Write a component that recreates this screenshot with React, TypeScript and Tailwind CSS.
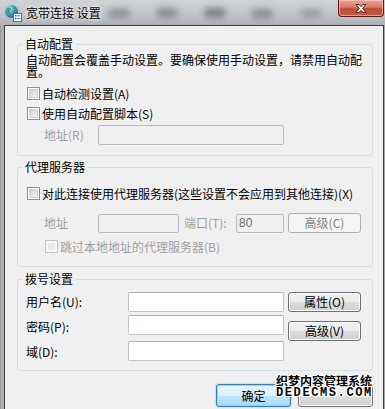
import React from "react";

function Check({ disabled }: { disabled?: boolean }) {
  if (disabled) {
    return (
      <span className="flex w-[13px] h-[13px] shrink-0 border border-[#c2c4c6] bg-[#f7f7f7] p-[2px]">
        <span className="flex-1 bg-[#e9e9e9]" />
      </span>
    );
  }
  return (
    <span className="flex w-[13px] h-[13px] shrink-0 border border-[#8e8f8f] bg-white p-[1px]">
      <span className="flex-1 border border-[#cfcfcf] bg-[linear-gradient(135deg,#cfd1d3_0%,#e6e6e6_60%,#f4f4f4_100%)]" />
    </span>
  );
}

function Btn({
  children,
  disabled,
  className = "",
}: {
  children: React.ReactNode;
  disabled?: boolean;
  className?: string;
}) {
  const base =
    "flex w-[73px] h-[20px] items-center justify-center rounded-[3px] border shrink-0";
  const look = disabled
    ? "border-[#adb2b5] bg-[#f4f4f4] text-[#838383]"
    : "border-[#707070] bg-[linear-gradient(to_bottom,#f2f2f2_0%,#ebebeb_50%,#dddddd_50%,#cfcfcf_100%)] shadow-[inset_0_0_0_1px_#fcfcfc] text-black";
  return <div className={`${base} ${look} ${className}`}>{children}</div>;
}

function Field({ w, h = 20, disabled, value }: { w: string; h?: number; disabled?: boolean; value?: string }) {
  return (
    <div
      className={`${w} ${h === 20 ? "h-[20px]" : "h-[19px]"} shrink-0 rounded-[2px] border flex items-center pl-[2px] ${
        disabled ? "border-[#b9bdc1] bg-[#f0f0f0] text-[#6d6d6d]" : "border-[#c3c7cc] border-t-[#abadb3] bg-white"
      } font-['Liberation_Sans',sans-serif]`}
    >
      {value}
    </div>
  );
}

export default function App() {
  return (
    <div className="relative w-[385px] h-[409px] overflow-hidden flex flex-col text-[12px] leading-[14px] text-black font-['Noto_Sans_CJK_SC','Noto_Sans',sans-serif] bg-[#a9adb1]">
      {/* Title bar */}
      <div className="relative h-[25px] shrink-0 flex items-start justify-between bg-[linear-gradient(to_bottom,#cfd3d6_0%,#c1c5c9_55%,#aeb2b6_100%)]">
        <span className="absolute left-[108px] top-[9px] w-[22px] h-[9px] rounded-full bg-[#8d9195] blur-[3px]" />
        <span className="absolute left-[156px] top-[8px] w-[22px] h-[10px] rounded-full bg-[#8a8e92] blur-[3px]" />
        <span className="absolute left-[204px] top-[8px] w-[22px] h-[10px] rounded-full bg-[#7f8387] blur-[3px]" />
        <span className="absolute left-[251px] top-[9px] w-[22px] h-[10px] rounded-full bg-[#8d9195] blur-[3px]" />
        <span className="absolute left-[300px] top-[9px] w-[22px] h-[9px] rounded-full bg-[#9a9ea2] blur-[3px]" />
        <div className="relative flex items-center h-[25px] pl-[4px]">
          <svg width="18" height="18" viewBox="0 0 18 18" className="shrink-0">
            <defs>
              <radialGradient id="globe" cx="35%" cy="30%" r="75%">
                <stop offset="0" stopColor="#d8f0ff" />
                <stop offset="0.45" stopColor="#4aa0dc" />
                <stop offset="1" stopColor="#1a5c9c" />
              </radialGradient>
            </defs>
            <circle cx="7.5" cy="7.5" r="6.5" fill="url(#globe)" />
            <path d="M3 4.5 C4.5 3 6.5 3.2 7 4.6 C7.4 6 5.6 6.4 5.8 8 C6 9.4 4.2 10 3 8.8 C2 7.6 2 5.6 3 4.5 Z" fill="#47a64a" />
            <path d="M9.5 2.6 C11.5 2.8 13 4.4 13 6 C11.6 6.4 10.4 5.6 9.6 4.6 Z" fill="#47a64a" />
            <rect x="9.5" y="9.5" width="8" height="8" fill="#fbfdff" stroke="#5c7488" strokeWidth="1" />
            <rect x="11" y="11" width="1.5" height="1.5" fill="#2f7bc0" />
            <rect x="13.2" y="11.3" width="3" height="1" fill="#2f7bc0" />
            <rect x="11" y="13.8" width="1.5" height="1.5" fill="#2f7bc0" />
            <rect x="13.2" y="14.1" width="3" height="1" fill="#2f7bc0" />
          </svg>
          <span className="ml-[4px] mt-[1px] [text-shadow:0_0_6px_#ffffff,0_0_3px_#ffffff]">宽带连接 设置</span>
        </div>
        <div className="relative mr-[1px] w-[46px] h-[17px] rounded-b-[4px] border border-t-0 border-[#5c1d14] bg-[linear-gradient(to_bottom,#e8a899_0%,#d57a68_45%,#c14a35_55%,#c75c45_100%)] shadow-[inset_0_0_0_1px_rgba(255,210,200,0.55)] flex items-center justify-center">
          <svg width="14" height="11" viewBox="0 0 14 11">
            <path
              d="M2 1.5 L5 1.5 L7 3.7 L9 1.5 L12 1.5 L8.6 5.5 L12 9.5 L9 9.5 L7 7.3 L5 9.5 L2 9.5 L5.4 5.5 Z"
              fill="#ffffff"
              stroke="#4a1a12"
              strokeWidth="0.9"
              strokeLinejoin="round"
            />
          </svg>
        </div>
      </div>

      {/* Window body */}
      <div className="flex flex-1 min-h-0">
        <div className="w-[4px] shrink-0 bg-[linear-gradient(to_right,#8c8c8c,#b4b4b4_40%,#a8a8a8)]" />
        <div className="flex-1 min-w-0 flex flex-col bg-[#f0f0f0] border-l border-t border-r border-[#3e3e3e]">
          {/* 自动配置 */}
          <fieldset className="ml-[12px] mr-[10px] mt-[11px] min-w-0 rounded-[3px] border border-[#d5dfe5] p-0">
            <legend className="ml-[5px] px-[2px] leading-[14px]">自动配置</legend>
            <div className="pl-[8px] pr-[6px] pt-[3px] pb-[10px] flex flex-col">
              <p className="leading-[12px] h-[24px] whitespace-nowrap">
                自动配置会覆盖手动设置。要确保使用手动设置，请禁用自动配
                <br />
                置。
              </p>
              <label className="mt-[9px] ml-[1px] flex items-center h-[13px] gap-[2px]">
                <Check />
                <span>自动检测设置(A)</span>
              </label>
              <label className="mt-[7px] ml-[1px] flex items-center h-[13px] gap-[2px]">
                <Check />
                <span>使用自动配置脚本(S)</span>
              </label>
              <div className="mt-[5px] pl-[18px] flex items-center h-[20px]">
                <span className="w-[54px] text-[#a0a0a0]">地址(R)</span>
                <Field w="w-[186px]" disabled />
              </div>
            </div>
          </fieldset>

          {/* 代理服务器 */}
          <fieldset className="ml-[12px] mr-[10px] mt-[4px] min-w-0 rounded-[3px] border border-[#d5dfe5] p-0">
            <legend className="ml-[5px] px-[2px] leading-[14px]">代理服务器</legend>
            <div className="pl-[8px] pr-[6px] pt-[13px] pb-[13px] flex flex-col">
              <label className="ml-[1px] flex items-center h-[13px] gap-[2px] whitespace-nowrap">
                <Check />
                <span>对此连接使用代理服务器(这些设置不会应用到其他连接)(X)</span>
              </label>
              <div className="mt-[13px] pl-[18px] flex items-center h-[20px] text-[#a0a0a0]">
                <span className="w-[54px]">地址</span>
                <Field w="w-[81px]" h={19} disabled />
                <span className="ml-[5px] w-[52px]">端口(T):</span>
                <Field w="w-[48px]" h={19} disabled value="80" />
                <Btn disabled className="ml-[4px]">
                  高级(C)
                </Btn>
              </div>
              <label className="mt-[7px] ml-[19px] flex items-center h-[13px] gap-[2px] text-[#a0a0a0]">
                <Check disabled />
                <span>跳过本地地址的代理服务器(B)</span>
              </label>
            </div>
          </fieldset>

          {/* 拨号设置 */}
          <fieldset className="ml-[12px] mr-[10px] mt-[5px] min-w-0 rounded-[3px] border border-[#d5dfe5] p-0">
            <legend className="ml-[5px] px-[2px] leading-[14px]">拨号设置</legend>
            <div className="pl-[8px] pt-[6px] pb-[9px] flex">
              <div className="flex flex-col">
                <div className="flex items-center h-[20px]">
                  <span className="w-[102px]">用户名(U):</span>
                  <Field w="w-[156px]" />
                </div>
                <div className="mt-[3px] flex items-center h-[20px]">
                  <span className="w-[102px] mt-[3px]">密码(P):</span>
                  <Field w="w-[156px]" />
                </div>
                <div className="mt-[6px] flex items-center h-[20px]">
                  <span className="w-[102px] mt-[1px]">域(D):</span>
                  <Field w="w-[156px]" />
                </div>
              </div>
              <div className="ml-[4px] flex flex-col">
                <Btn>属性(O)</Btn>
                <Btn className="mt-[9px]">高级(V)</Btn>
              </div>
            </div>
          </fieldset>

          {/* OK / Cancel */}
          <div className="mt-[13px] mr-[10px] flex justify-end gap-[7px]">
            <div className="w-[75px] h-[23px] rounded-[3px] border border-[#3c7fb1] bg-[linear-gradient(to_bottom,#eaf6fd_0%,#d9f0fc_50%,#bee6fd_50%,#a7d9f5_100%)] shadow-[inset_0_0_0_1px_#8fd5f5,0_0_2px_#66c2ef] flex items-center justify-center">
              确定
            </div>
            <div className="w-[75px] h-[23px] rounded-[3px] border border-[#707070] bg-[linear-gradient(to_bottom,#f2f2f2_0%,#ebebeb_50%,#dddddd_50%,#cfcfcf_100%)] shadow-[inset_0_0_0_1px_#fcfcfc]" />
          </div>
        </div>
        <div className="w-[1px] shrink-0 bg-[#a6a6a6]" />
      </div>

      {/* Watermark */}
      <div className="absolute left-[276px] top-[374px] flex flex-col items-start font-bold text-black [text-shadow:1px_0_0_#fff,-1px_0_0_#fff,0_1px_0_#fff,0_-1px_0_#fff,1px_1px_0_#fff,-1px_-1px_0_#fff,1px_-1px_0_#fff,-1px_1px_0_#fff]">
        <span className="text-[12px] leading-[14px]">织梦内容管理系统</span>
        <span className="text-[12px] leading-[11px] tracking-[1.6px] font-['Liberation_Mono',monospace]">DEDECMS.COM</span>
      </div>
    </div>
  );
}
